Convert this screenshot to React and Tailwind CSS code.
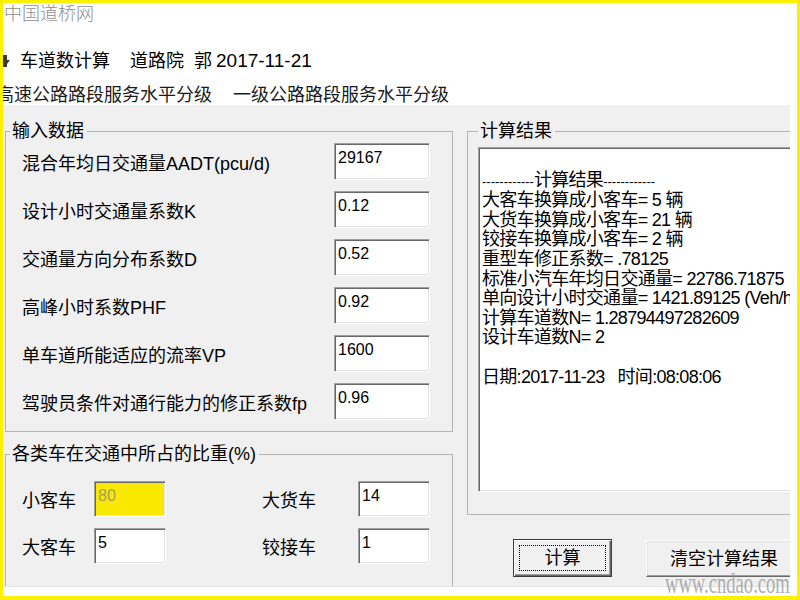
const cjk = "font-['Liberation_Sans','Noto_Sans_CJK_SC',sans-serif]";

const sunken =
  "border border-t-[#a0a0a0] border-l-[#a0a0a0] border-b-white border-r-white shadow-[inset_1px_1px_0_#696969,inset_-1px_-1px_0_#e3e3e3]";

const inputs = [
  ["混合年均日交通量AADT(pcu/d)", "29167"],
  ["设计小时交通量系数K", "0.12"],
  ["交通量方向分布系数D", "0.52"],
  ["高峰小时系数PHF", "0.92"],
  ["单车道所能适应的流率VP", "1600"],
  ["驾驶员条件对通行能力的修正系数fp", "0.96"],
];

const results = [
  "大客车换算成小客车= 5 辆",
  "大货车换算成小客车= 21 辆",
  "铰接车换算成小客车= 2 辆",
  "重型车修正系数= .78125",
  "标准小汽车年均日交通量= 22786.71875",
  "单向设计小时交通量= 1421.89125 (Veh/h)",
  "计算车道数N= 1.28794497282609",
  "设计车道数N= 2",
];

function Box({ value, className = "bg-white text-black", w = "w-[96px]", h = "h-[37px]" }) {
  return (
    <div className={`${w} ${h} shrink-0 ${sunken} ${className} pt-[5px] pl-[3px] text-[16px] leading-[18px] font-['Liberation_Sans',sans-serif]`}>
      {value}
    </div>
  );
}

function Legend({ children, ml = "ml-[4px]" }) {
  return (
    <legend className={`${ml} px-[2px] pr-[3px] text-[18px] leading-[22px] text-black`}>{children}</legend>
  );
}

export default function App() {
  return (
    <div className={`w-[800px] h-[600px] bg-[#fdf000] pt-[3px] pl-[3px] pr-[3px] pb-[4px] ${cjk}`}>
      <div className="relative h-full bg-white flex flex-col overflow-hidden pr-[7px] pb-[9px]">
        {/* header */}
        <div className="h-[102px] shrink-0">
          <div className="h-[22px] pl-[1px] text-[18px] leading-[22px] text-[#8e8e8e] font-light">中国道桥网</div>
          <div className="mt-[25px] h-[22px] flex items-center text-[18px] leading-[22px] text-black">
            <svg width="7" height="12" viewBox="0 0 7 12" className="shrink-0">
              <path d="M0 0h4v5h3l-3 4v3H0z" fill="#3a3a3a" />
            </svg>
            <span className="ml-[10px]">车道数计算</span>
            <span className="ml-[20px]">道路院</span>
            <span className="ml-[10px]">郭</span>
            <span className="ml-[4px] text-[19px]">2017-11-21</span>
          </div>
          <div className="mt-[12px] h-[22px] flex items-center text-[18px] leading-[22px] text-[#1a1a1a] whitespace-nowrap -ml-[7px]">
            <span>高速公路路段服务水平分级</span>
            <span className="ml-[21px]">一级公路路段服务水平分级</span>
          </div>
        </div>

        {/* window body */}
        <div className="flex-1 min-h-0 flex gap-[14px] pl-[2px] bg-[#f0f0f0] overflow-hidden border-b border-[#e3e3e3]">
          <div className="w-[448px] shrink-0 flex flex-col">
            <fieldset className="mt-[15px] border border-[#b4b4b4]">
              <Legend>输入数据</Legend>
              <div className="pt-[1px] pb-[11px] pl-[16px] pr-[22px] flex flex-col gap-[11px]">
                {inputs.map(([label, value]) => (
                  <div key={label} className="h-[37px] flex items-center justify-between">
                    <span className="text-[18px] leading-[22px] pt-[4px] text-black whitespace-nowrap">{label}</span>
                    <Box value={value} />
                  </div>
                ))}
              </div>
            </fieldset>

            <fieldset className="mt-[11px] flex-1 border border-b-0 border-[#b4b4b4]">
              <Legend>各类车在交通中所占的比重(%)</Legend>
              <div className="pt-[16px] pl-[16px] flex flex-col gap-[11px]">
                <div className="h-[36px] flex items-center">
                  <span className="w-[72px] text-[18px] pt-[4px]">小客车</span>
                  <Box value="80" w="w-[72px]" h="h-[36px]" className="bg-[#f9e900] text-[#a39c6c]" />
                  <span className="ml-[96px] w-[96px] text-[18px] pt-[4px]">大货车</span>
                  <Box value="14" w="w-[72px]" h="h-[36px]" />
                </div>
                <div className="h-[36px] flex items-center">
                  <span className="w-[72px] text-[18px] pt-[4px]">大客车</span>
                  <Box value="5" w="w-[72px]" h="h-[36px]" />
                  <span className="ml-[96px] w-[96px] text-[18px] pt-[4px]">铰接车</span>
                  <Box value="1" w="w-[72px]" h="h-[36px]" />
                </div>
              </div>
            </fieldset>
          </div>

          <div className="w-[340px] shrink-0 flex flex-col">
            <fieldset className="mt-[15px] border border-[#b4b4b4]">
              <Legend ml="ml-[10px]">计算结果</Legend>
              <div className="pt-[5px] pb-[22px] pl-[10px]">
                <div className={`h-[345px] ${sunken} bg-white pl-[3px] pt-[3px] text-[18px] leading-[19.6px] tracking-[-0.7px] text-black whitespace-pre overflow-hidden`}>
                  <div>&nbsp;</div>
                  <div>
                    <span className="text-[13px] tracking-normal">------------</span>计算结果<span className="text-[13px] tracking-normal">------------</span>
                  </div>
                  {results.map((r) => (
                    <div key={r}>{r}</div>
                  ))}
                  <div>&nbsp;</div>
                  <div>日期:2017-11-23{"   "}时间:08:08:06</div>
                </div>
              </div>
            </fieldset>

            <div className="mt-[24px] flex items-start">
              <button className="ml-[46px] w-[99px] h-[38px] border border-[#3c3c3c] bg-[#f0f0f0] p-[5px] shadow-[inset_1px_1px_0_#ffffff,inset_-1px_-1px_0_#696969,inset_-2px_-2px_0_#a0a0a0]">
                <div className="h-full w-full border border-dotted border-black flex items-center justify-center text-[18px] leading-[22px] text-black">
                  计算
                </div>
              </button>
              <button className="ml-[34px] mt-[1px] w-[156px] h-[37px] border border-t-white border-l-white border-b-[#696969] border-r-[#696969] bg-[#f0f0f0] shadow-[inset_-1px_-1px_0_#a0a0a0,inset_1px_1px_0_#e3e3e3] flex items-center justify-center text-[18px] leading-[22px] text-black">
                清空计算结果
              </button>
            </div>
          </div>
        </div>

        <div className="absolute left-[662px] top-[565px] origin-left scale-x-[0.62] text-[30px] leading-[30px] text-[#9c9c9c] opacity-80 font-['Liberation_Serif',serif] whitespace-nowrap">
          www.cndao.com
        </div>
      </div>
    </div>
  );
}
